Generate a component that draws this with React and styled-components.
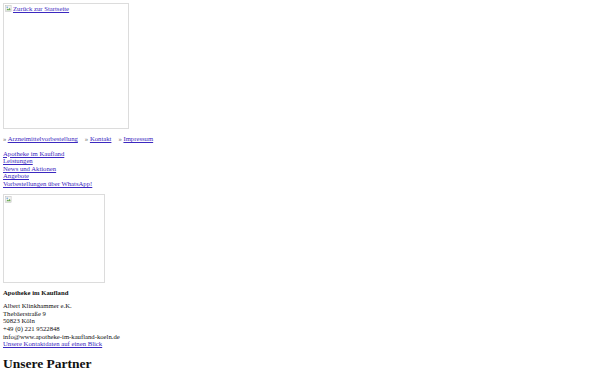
import React from 'react'
import styled, { createGlobalStyle } from 'styled-components'

const Global = createGlobalStyle`
  body {
    margin: 3px;
    font-family: "Liberation Serif", "Times New Roman", serif;
    font-size: 6.7px;
    line-height: 7.6px;
    color: #111;
    background: #fff;
  }
  a { color: #3b28c0; }
`

const Broken = styled.div`
  box-sizing: border-box;
  width: ${p => p.w}px;
  height: ${p => p.h}px;
  border: 1px solid #dcdcdc;
  padding: 1px;
  display: flex;
  align-items: flex-start;
  gap: 1px;
  color: #3b28c0;
  text-decoration: underline;
`

const Icon = () => (
  <svg width="7" height="7" viewBox="0 0 16 16">
    <rect x="1" y="1" width="13" height="14" fill="#f2f2f2" stroke="#b5b5b5" />
    <path d="M3 12 L6 8 L8 10 L11 6 L13 12 Z" fill="#6aa84f" />
    <circle cx="5" cy="5" r="1.6" fill="#5b9bd5" />
  </svg>
)

const TopLinks = styled.div`
  margin-top: 6px;
  display: flex;
  gap: 7px;
`

const TopItem = styled.span`
  color: #666;
  a { color: #3b28c0; }
`

const Nav = styled.nav`
  margin-top: 7px;
  display: flex;
  flex-direction: column;
`

const Figure = styled.div`
  margin-top: 6px;
`

const Title = styled.div`
  margin-top: 6px;
  font-weight: bold;
`

const Address = styled.address`
  margin-top: 6px;
  font-style: normal;
  display: flex;
  flex-direction: column;
`

const Heading = styled.h2`
  margin: 8px 0 0;
  font-size: 13.5px;
  line-height: 15px;
  font-weight: bold;
`

export default function App() {
  return (
    <>
      <Global />
      <Broken w={126} h={126}>
        <Icon />
        <span>Zurück zur Startseite</span>
      </Broken>
      <TopLinks>
        <TopItem>» <a href="#">Arzneimittelvorbestellung</a></TopItem>
        <TopItem>» <a href="#">Kontakt</a></TopItem>
        <TopItem>» <a href="#">Impressum</a></TopItem>
      </TopLinks>
      <Nav>
        <a href="#">Apotheke im Kaufland</a>
        <a href="#">Leistungen</a>
        <a href="#">News und Aktionen</a>
        <a href="#">Angebote</a>
        <a href="#">Vorbestellungen über WhatsApp!</a>
      </Nav>
      <Figure>
        <Broken w={102} h={89}>
          <Icon />
        </Broken>
      </Figure>
      <Title>Apotheke im Kaufland</Title>
      <Address>
        <span>Albert Klinkhammer e.K.</span>
        <span>Thebäerstraße 9</span>
        <span>50823 Köln</span>
        <span>+49 (0) 221 9522848</span>
        <span>info@www.apotheke-im-kaufland-koeln.de</span>
        <a href="#">Unsere Kontaktdaten auf einen Blick</a>
      </Address>
      <Heading>Unsere Partner</Heading>
    </>
  )
}
